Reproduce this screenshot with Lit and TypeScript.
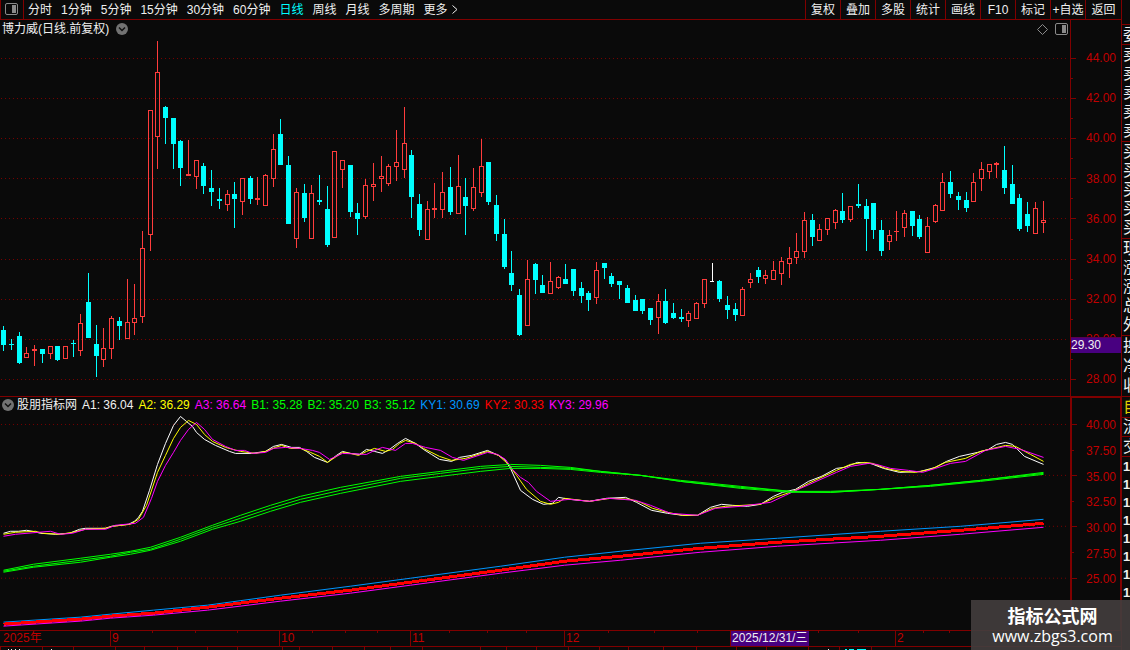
import { LitElement, html, svg, css } from "lit";
import { customElement, property, state } from "lit/decorators.js";

type Candle = [number, number, number, number, number, string];

/* x, high, body top, body bottom, low, kind (u = up, d = down, w = flat) */
const CANDLES: Candle[] = [
  [3, 326, 330, 345, 351, "d"], [11, 339, 344, 345, 350, "d"], [19, 332, 336, 363, 364, "d"],
  [26, 347, 353, 358, 358, "u"], [34, 345, 349, 351, 366, "u"], [42, 349, 349, 354, 363, "d"],
  [50, 346, 346, 354, 359, "u"], [57, 346, 346, 360, 361, "d"], [65, 346, 346, 359, 359, "u"],
  [73, 340, 343, 344, 357, "d"], [80, 314, 323, 351, 356, "u"], [88, 273, 302, 338, 338, "d"],
  [96, 325, 344, 356, 377, "d"], [103, 328, 348, 360, 367, "u"], [111, 316, 318, 349, 359, "u"],
  [119, 317, 321, 326, 340, "d"], [127, 279, 322, 339, 339, "u"], [134, 284, 318, 323, 335, "u"],
  [142, 231, 248, 317, 323, "u"], [150, 110, 110, 235, 251, "u"], [157, 41, 72, 137, 169, "u"],
  [165, 106, 107, 118, 144, "d"], [173, 118, 118, 144, 169, "d"], [180, 140, 141, 168, 186, "d"],
  [188, 140, 174, 176, 176, "u"], [196, 160, 160, 177, 189, "u"], [203, 163, 166, 186, 194, "d"],
  [211, 170, 188, 192, 206, "d"], [219, 188, 199, 201, 209, "d"], [227, 190, 194, 205, 211, "u"],
  [234, 182, 194, 199, 228, "d"], [242, 178, 178, 202, 215, "u"], [250, 176, 178, 199, 204, "d"],
  [257, 177, 198, 200, 205, "u"], [265, 174, 175, 206, 206, "u"], [273, 134, 149, 179, 187, "u"],
  [280, 119, 134, 165, 165, "d"], [288, 156, 165, 224, 224, "d"], [296, 188, 192, 239, 248, "u"],
  [304, 184, 193, 218, 222, "d"], [311, 185, 193, 239, 239, "u"], [319, 175, 200, 202, 205, "d"],
  [327, 186, 209, 245, 247, "d"], [334, 151, 151, 238, 238, "u"], [342, 160, 160, 170, 188, "u"],
  [350, 165, 165, 212, 217, "d"], [357, 203, 213, 219, 235, "d"], [365, 179, 185, 217, 219, "u"],
  [373, 163, 184, 187, 201, "u"], [381, 156, 176, 179, 192, "u"], [388, 164, 166, 184, 186, "u"],
  [396, 130, 162, 167, 181, "u"], [404, 107, 143, 170, 178, "u"], [411, 150, 155, 197, 218, "d"],
  [419, 194, 204, 230, 236, "d"], [427, 201, 209, 240, 240, "u"], [434, 183, 208, 210, 218, "u"],
  [442, 172, 192, 210, 218, "u"], [450, 167, 187, 212, 215, "d"], [458, 155, 186, 214, 214, "u"],
  [465, 178, 197, 206, 235, "d"], [473, 168, 187, 209, 211, "u"], [481, 139, 166, 193, 197, "u"],
  [488, 162, 162, 202, 205, "d"], [496, 195, 205, 234, 241, "d"], [504, 219, 234, 267, 269, "d"],
  [511, 251, 273, 285, 291, "d"], [519, 289, 295, 335, 336, "d"], [527, 260, 279, 326, 326, "u"],
  [535, 263, 264, 280, 294, "d"], [542, 275, 285, 293, 293, "d"], [550, 262, 281, 294, 294, "u"],
  [558, 276, 277, 288, 289, "u"], [565, 264, 279, 284, 284, "d"], [573, 269, 269, 291, 296, "d"],
  [581, 282, 288, 296, 303, "d"], [588, 291, 293, 300, 311, "d"], [596, 262, 270, 298, 304, "u"],
  [604, 263, 263, 268, 279, "d"], [611, 273, 276, 284, 287, "d"], [619, 281, 281, 285, 299, "d"],
  [627, 285, 288, 303, 303, "d"], [635, 295, 300, 311, 311, "d"], [642, 299, 299, 311, 314, "d"],
  [650, 308, 308, 320, 325, "d"], [658, 294, 301, 318, 334, "u"], [665, 289, 301, 323, 324, "d"],
  [673, 303, 313, 318, 319, "d"], [681, 309, 317, 319, 322, "d"], [688, 311, 313, 321, 327, "u"],
  [696, 302, 303, 319, 319, "u"], [704, 279, 279, 304, 308, "u"], [712, 263, 281, 282, 282, "w"],
  [719, 280, 281, 299, 302, "d"], [727, 296, 305, 310, 319, "d"], [735, 303, 309, 315, 321, "d"],
  [742, 287, 289, 316, 316, "u"], [750, 273, 279, 283, 288, "u"], [758, 267, 270, 277, 283, "d"],
  [765, 270, 275, 279, 284, "u"], [773, 261, 270, 280, 280, "u"], [781, 257, 261, 274, 285, "u"],
  [789, 247, 258, 264, 278, "u"], [796, 233, 251, 258, 264, "u"], [804, 212, 220, 252, 258, "u"],
  [812, 214, 220, 237, 246, "d"], [819, 224, 229, 241, 241, "u"], [827, 218, 218, 230, 235, "u"],
  [835, 209, 210, 223, 229, "u"], [842, 193, 211, 220, 223, "d"], [850, 206, 206, 220, 222, "u"],
  [858, 184, 204, 206, 208, "d"], [866, 199, 206, 219, 251, "d"], [873, 203, 203, 230, 239, "d"],
  [881, 220, 230, 251, 256, "d"], [889, 230, 235, 242, 250, "u"], [896, 211, 231, 232, 241, "u"],
  [904, 210, 213, 228, 237, "u"], [912, 211, 211, 226, 236, "d"], [919, 215, 219, 237, 239, "d"],
  [927, 217, 226, 253, 253, "u"], [935, 204, 205, 222, 223, "u"], [942, 173, 182, 211, 211, "u"],
  [950, 171, 182, 194, 198, "d"], [958, 192, 196, 200, 210, "d"], [966, 192, 200, 208, 212, "d"],
  [973, 173, 182, 202, 202, "u"], [981, 162, 169, 179, 191, "u"], [989, 164, 164, 172, 179, "u"],
  [996, 162, 163, 165, 178, "u"], [1004, 146, 170, 188, 194, "d"], [1012, 165, 184, 204, 204, "d"],
  [1019, 194, 198, 229, 231, "d"], [1027, 202, 214, 226, 232, "d"], [1035, 202, 208, 234, 234, "u"],
  [1043, 201, 220, 223, 233, "u"],
];

const A1 =
  "3,533 10,531 18,531 26,530 32,531 40,533 55,534 69,533 79,529 85,528 105,528 111,526 128,524 134,521 138,517 142,511 149,490 157,464 165,443 173,425 180,416 186,421 192,426 196,432 204,439 215,445 229,451 235,453 251,453 265,451 273,446 281,444 291,447 299,447 306,451 314,457 327,462 336,455 342,451 350,453 359,454 366,449 374,451 382,453 389,449 397,443 405,438 415,443 423,449 431,454 439,459 451,461 459,457 471,455 487,450 498,455 504,459 510,468 520,490 532,499 543,504 552,503 558,497 569,499 589,501 606,498 625,497 636,502 651,510 667,513 682,515 697,515 710,507 721,504 732,505 747,506 760,504 773,496 782,492 795,489 808,481 821,476 836,468 844,467 857,462 870,463 883,468 899,472 920,471 935,467 946,461 959,456 977,452 988,449 996,444 1005,442 1012,444 1024,456 1043,464";
const A2 =
  "3,534 15,532 35,531 42,533 60,534 72,532 85,529 105,528 112,526 130,524 138,519 146,505 157,472 165,455 173,438 180,427 188,420 196,424 204,434 212,441 225,447 240,451 255,453 265,451 275,447 281,445 290,448 300,448 310,452 319,456 327,462 342,452 350,453 358,455 366,451 374,448 385,451 392,449 399,443 405,440 415,443 423,448 439,456 451,460 465,458 487,451 498,455 508,464 516,475 526,489 540,501 550,504 558,502 564,498 589,501 610,498 630,499 640,502 652,508 667,512 682,515 697,515 712,508 725,506 760,504 775,497 795,490 808,483 836,470 850,464 864,462 872,463 885,468 900,471 915,472 930,469 945,462 965,458 980,451 1005,445 1015,446 1030,454 1043,461";
const A3 =
  "3,536 15,534 50,531 60,534 72,533 85,529 105,529 115,525 135,523 143,517 151,498 157,481 165,465 173,452 180,440 188,429 196,422 204,429 212,439 225,446 235,450 244,450 252,453 265,452 273,448 285,447 300,448 312,450 319,452 329,459 342,453 366,454 374,450 382,447 395,450 405,443 412,443 425,447 440,450 452,457 463,460 487,452 497,454 505,459 512,469 520,477 528,482 536,491 550,501 569,499 589,501 608,498 635,500 650,505 670,513 697,515 715,508 740,506 770,502 785,495 800,488 836,472 850,466 868,463 876,464 890,468 908,470 922,472 935,468 950,463 965,461 985,450 1005,446 1020,449 1043,457";

/* x followed by the y of each line in the band */
const B_BAND = [
  [3, 570, 571, 572], [33, 564, 566, 567], [80, 558, 560, 562], [110, 554, 556, 557],
  [130, 551, 552, 554], [150, 547, 549, 550], [180, 537, 539, 541], [212, 525, 527, 529],
  [240, 515, 518, 521], [270, 505, 508, 511], [300, 496, 499, 502], [340, 487, 490, 493],
  [400, 476, 478, 481], [440, 471, 473, 476], [480, 466, 468, 471], [510, 464, 466, 468],
  [540, 465, 467, 468], [570, 467, 468, 469], [600, 471, 471, 472], [640, 475, 475, 475],
  [680, 480, 481, 481], [740, 486, 487, 488], [790, 491, 491, 492], [830, 491, 492, 492],
  [880, 489, 489, 489], [930, 485, 485, 486], [980, 480, 480, 481], [1043, 472, 473, 474],
];
const KY_BAND = [
  [3, 622, 624, 626], [80, 617, 619, 621], [110, 614, 616, 618], [153, 610, 613, 615],
  [207, 605, 607, 610], [280, 595, 598, 601], [350, 586, 590, 593], [410, 578, 582, 585],
  [500, 566, 570, 573], [564, 557, 561, 565], [620, 551, 556, 560], [700, 543, 548, 552],
  [777, 538, 542, 546], [880, 531, 536, 540], [960, 526, 530, 534], [1043, 519, 523, 527],
];
const band = (rows: number[][], i: number) => rows.map((r) => `${r[0]},${r[i]}`).join(" ");

const LINES = [
  { pts: A1, color: "#ffffff", w: 1 },
  { pts: A2, color: "#ffff00", w: 1 },
  { pts: A3, color: "#ff00ff", w: 1 },
  { pts: band(B_BAND, 1), color: "#00ff00", w: 1 },
  { pts: band(B_BAND, 2), color: "#00ff00", w: 1 },
  { pts: band(B_BAND, 3), color: "#00ff00", w: 1 },
  { pts: band(KY_BAND, 1), color: "#0096ff", w: 1 },
  { pts: band(KY_BAND, 2), color: "#ff0000", w: 3 },
  { pts: band(KY_BAND, 3), color: "#ff00ff", w: 1 },
];

const PRICE_GRID = [58, 98, 138, 178, 218, 259, 299, 339, 379];
const PRICE_MINOR = [78, 118, 158, 198, 239, 279, 319, 359];
const SUB_GRID = [424, 475, 526, 578];
const SUB_MINOR = [450, 501, 552];
const DATE_TICKS = [152, 195, 237, 312, 345, 377, 449, 487, 526, 608, 654, 697, 818, 858, 923, 949];
const STRIP_TICKS = [
  0, 42, 73, 115, 144, 177, 207, 237, 282, 299, 332, 364, 390, 422, 480, 506, 536, 568, 599, 628,
  663, 696, 736, 766, 808, 839, 871,
];

const grid = (rows: number[]) =>
  rows.map((y) => svg`<path d="M1 ${y + 0.5}H1067" stroke="#780000" stroke-dasharray="1 3"/>`);

const panelIcon = html`<svg width="13" height="12" viewBox="0 0 13 12" aria-hidden="true">
  <rect x="0.5" y="0.5" width="12" height="11" rx="1.5" fill="none" stroke="#8a8a8a" />
  <rect x="7" y="2" width="4" height="8" fill="#8a8a8a" />
</svg>`;
const chevronIcon = html`<svg width="12" height="12" viewBox="0 0 12 12" aria-hidden="true">
  <circle cx="6" cy="6" r="6" fill="#727272" />
  <path d="M3 4.5L6 7.5L9 4.5" fill="none" stroke="#111" stroke-width="1.5" />
</svg>`;

@customElement("quote-toolbar")
export class QuoteToolbar extends LitElement {
  @state() private active = "日线";
  private periods = ["分时", "1分钟", "5分钟", "15分钟", "30分钟", "60分钟", "日线", "周线", "月线", "多周期"];
  private actions = ["复权", "叠加", "多股", "统计", "画线", "F10", "标记", "+自选", "返回"];

  static styles = css`
    :host { display: flex; height: 20px; box-sizing: border-box; border-bottom: 1px solid #800000; }
    button {
      appearance: none; background: none; border: 0; margin: 0; padding: 0; color: #f0f0f0;
      font: inherit; white-space: nowrap; cursor: pointer; display: flex; align-items: center;
    }
    .layout { width: 24px; box-sizing: border-box; border: solid #800000; border-width: 0 1px; padding: 0 0 2px 4px; }
    .periods { display: flex; gap: 9px; padding: 0 4px; flex: 1; min-width: 0; overflow: hidden; }
    .active { color: #00ffff; }
    .more { gap: 4px; }
    .actions { display: flex; }
    .actions button { width: 35px; border-left: 1px solid #800000; box-sizing: border-box; justify-content: center; }
    .actions button:last-child { width: 36px; }
  `;

  render() {
    return html`
      <button class="layout" aria-label="布局">${panelIcon}</button>
      <nav class="periods">
        ${this.periods.map(
          (p) => html`<button class=${p === this.active ? "active" : ""} @click=${() => (this.active = p)}>${p}</button>`
        )}
        <button class="more">更多<svg width="6" height="9" viewBox="0 0 6 9" aria-hidden="true">
          <path d="M0.5 0.5L5 4.5L0.5 8.5" fill="none" stroke="#f0f0f0" /></svg></button>
      </nav>
      <div class="actions">${this.actions.map((a) => html`<button>${a}</button>`)}</div>
    `;
  }
}

@customElement("value-axis")
export class ValueAxis extends LitElement {
  @property({ attribute: false }) labels: string[] = [];
  @property({ attribute: false }) major: number[] = [];
  @property({ attribute: false }) minor: number[] = [];
  @property({ attribute: false }) top = 0;
  @property({ attribute: false }) span = 1;

  static styles = css`
    :host { display: grid; grid-template: minmax(0, 1fr) / 100%; color: #c00000; }
    svg, ol { grid-area: 1 / 1; }
    svg { width: 5px; height: 100%; display: block; }
    ol {
      list-style: none; margin: 0; padding: var(--pad); display: flex; flex-direction: column;
      justify-content: space-between; text-align: right; line-height: 16px;
    }
  `;

  render() {
    return html`
      <svg viewBox="0 ${this.top} 5 ${this.span}" preserveAspectRatio="none" shape-rendering="crispEdges" aria-hidden="true">
        ${this.major.map((y) => svg`<rect x="0" y=${y} width="5" height="1" fill="#800000"/>`)}
        ${this.minor.map((y) => svg`<rect x="0" y=${y} width="2" height="1" fill="#800000"/>`)}
      </svg>
      <ol>${this.labels.map((l) => html`<li>${l}</li>`)}</ol>
    `;
  }
}

@customElement("side-quotes")
export class SideQuotes extends LitElement {
  private groups = ["", "委", "卖卖卖卖卖", "买买买买买", "现涨涨总外", "换净收", "自", "流", "交"];

  static styles = css`
    :host {
      display: grid; box-sizing: border-box; border-left: 1px solid #800000; overflow: hidden;
      grid-template-rows: 25fr 20fr 97fr 97fr 97fr 61fr 21fr 19fr 20fr 193fr;
      font-size: 16px; color: #f0f0f0;
    }
    .group { display: flex; flex-direction: column; min-height: 0; overflow: hidden; padding-left: 1px; border-bottom: 1px solid #800000; }
    .group span { flex: 1; min-height: 0; display: flex; align-items: center; line-height: 16px; }
    .own { color: #e0d000; }
    .ticks { overflow: hidden; min-height: 0; padding: 1px 0 0 1px; font-size: 13px; line-height: 18px; font-weight: 700; }
    .ticks div { height: 18px; }
  `;

  render() {
    return html`
      ${this.groups.map(
        (g) => html`<div class="group ${g === "自" ? "own" : ""}">${[...g].map((c) => html`<span>${c}</span>`)}</div>`
      )}
      <div class="ticks">${Array.from({ length: 8 }, () => html`<div>1</div>`)}</div>
    `;
  }
}

@customElement("app-root")
export class AppRoot extends LitElement {
  private legend = [
    ["A1: 36.04", "#f0f0f0"], ["A2: 36.29", "#ffff00"], ["A3: 36.64", "#ff00ff"],
    ["B1: 35.28", "#00ff00"], ["B2: 35.20", "#00ff00"], ["B3: 35.12", "#00ff00"],
    ["KY1: 30.69", "#0096ff"], ["KY2: 30.33", "#ff0000"], ["KY3: 29.96", "#ff00ff"],
  ];
  private months = ["2025年", "9", "10", "11", "12", "2"];

  static styles = css`
    :host {
      display: flex; position: relative; height: 100vh; overflow: hidden; background: #0a0a0a; color: #f0f0f0;
      font-family: "Liberation Sans", "Noto Sans CJK SC", sans-serif; font-size: 12px; line-height: 16px;
    }
    .main { flex: 1; min-width: 0; display: flex; flex-direction: column; }
    side-quotes { width: 9px; }
    .panel { display: flex; min-height: 0; }
    .price { flex: 377 1 0; border-bottom: 1px solid #800000; box-sizing: border-box; }
    .study { flex: 233 1 0; }
    .plot { flex: 1; min-width: 0; display: grid; grid-template: minmax(0, 1fr) / minmax(0, 1fr); }
    .plot > * { grid-area: 1 / 1; }
    .chart { display: block; width: 100%; height: 100%; }
    .head { display: flex; align-items: center; align-self: start; height: 18px; white-space: nowrap; }
    .title { padding: 0 2px; gap: 7px; }
    .tools { margin-left: auto; display: flex; gap: 7px; align-items: center; }
    .icon { appearance: none; background: none; border: 0; padding: 0; margin: 0; display: flex; cursor: pointer; }
    .legend { gap: 5px; padding-left: 2px; height: 16px; }
    .legend .icon { margin-right: -2px; }
    .scale { width: 51px; box-sizing: border-box; border-left: 1px solid #800000; position: relative; display: grid; }
    .scale value-axis { --pad: 30px 5px 9px 0; }
    .scale.box { border: solid #800000; border-width: 1px 1px 0 2px; }
    .scale.box value-axis { --pad: 19px 4px 43px 0; }
    .now { position: absolute; left: 0; right: 0; top: 317px; height: 15px; line-height: 15px; background: #480080; border-top: 1px solid #5a0050; }
    .dates { height: 16px; box-sizing: border-box; border-top: 1px solid #800000; position: relative; display: grid; grid-template: 15px / minmax(0, 1fr); color: #c00000; }
    .dates > .chart, .months { grid-area: 1 / 1; }
    .months { display: grid; grid-template-columns: 110fr 169fr 131fr 154fr 331fr 226fr; }
    .month { line-height: 15px; border-left: 1px solid #800000; padding-left: 1px; }
    .month:first-child { border-left: 0; padding-left: 3px; }
    .cursor { position: absolute; left: 730px; top: 0; height: 15px; line-height: 15px; padding: 0 2px 0 1px; background: #480080; border-left: 1px solid #800000; color: #f0f0f0; }
    .strip { height: 4px; box-sizing: border-box; border-top: 1px solid #800000; }
    .mark {
      position: absolute; right: 0; bottom: 0; width: 159px; height: 50px; box-sizing: border-box; padding: 4px 0 0 4px;
      background: rgba(66, 61, 61, 0.92); color: #fff; text-align: center;
    }
    .mark strong { display: block; font: 700 18px/22px "Noto Sans CJK SC", sans-serif; }
    .mark a { display: block; color: #fff; text-decoration: none; font: 16px/20px "Open Sans", sans-serif; }
  `;

  private candle([x, hi, top, bottom, lo, kind]: Candle) {
    const color = kind === "u" ? "#ff3c3c" : kind === "d" ? "#00ffff" : "#ffffff";
    const h = bottom - top;
    const body =
      kind === "u" && h > 2
        ? svg`<rect x=${x - 1.5} y=${top + 0.5} width="4" height=${h - 1} fill="none" stroke=${color}/>`
        : svg`<rect x=${x - 2} y=${top} width=${kind === "w" ? 4 : 5} height=${h} fill=${color}/>`;
    return svg`
      <rect x=${x} y=${hi} width="1" height=${top - hi} fill=${color}/>
      <rect x=${x} y=${bottom} width="1" height=${lo - bottom} fill=${color}/>
      ${body}`;
  }

  render() {
    return html`
      <div class="main">
        <quote-toolbar></quote-toolbar>
        <section class="panel price">
          <div class="plot">
            <svg class="chart" viewBox="0 20 1070 376" preserveAspectRatio="none" shape-rendering="crispEdges" role="img" aria-label="日线">
              ${grid(PRICE_GRID)} ${CANDLES.map((c) => this.candle(c))}
            </svg>
            <div class="head title">
              <span>博力威(日线.前复权)</span>
              <button class="icon" aria-label="展开">${chevronIcon}</button>
              <span class="tools">
                <button class="icon" aria-label="标注">
                  <svg width="11" height="11" viewBox="0 0 11 11"><path d="M5.5 0.5L10.5 5.5L5.5 10.5L0.5 5.5Z" fill="none" stroke="#8a8a8a" /></svg>
                </button>
                <button class="icon" aria-label="侧栏">${panelIcon}</button>
              </span>
            </div>
          </div>
          <div class="scale">
            <value-axis .top=${20} .span=${376} .major=${PRICE_GRID} .minor=${PRICE_MINOR}
              .labels=${["44.00", "42.00", "40.00", "38.00", "36.00", "34.00", "32.00", "30.00", "28.00"]}></value-axis>
            <div class="now">29.30</div>
          </div>
        </section>
        <section class="panel study">
          <div class="plot">
            <svg class="chart" viewBox="0 397 1070 233" preserveAspectRatio="none" shape-rendering="crispEdges" role="img" aria-label="股朋指标网">
              ${grid(SUB_GRID)}
              ${LINES.map(
                (l) => svg`<polyline points=${l.pts} transform="translate(0.5 0.5)" fill="none" stroke=${l.color} stroke-width=${l.w}/>`
              )}
            </svg>
            <div class="head legend">
              <button class="icon" aria-label="展开">${chevronIcon}</button>
              <span>股朋指标网</span>
              ${this.legend.map(([t, c]) => html`<span style="color:${c}">${t}</span>`)}
            </div>
          </div>
          <div class="scale box">
            <value-axis .top=${398} .span=${232} .major=${SUB_GRID} .minor=${SUB_MINOR}
              .labels=${["40.00", "37.50", "35.00", "32.50", "30.00", "27.50", "25.00"]}></value-axis>
          </div>
        </section>
        <div class="dates">
          <svg class="chart" viewBox="0 0 1121 15" preserveAspectRatio="none" shape-rendering="crispEdges" aria-hidden="true">
            ${DATE_TICKS.map((x) => svg`<rect x=${x} y="0" width="1" height="2" fill="#800000"/>`)}
          </svg>
          <div class="months">${this.months.map((m) => html`<div class="month">${m}</div>`)}</div>
          <span class="cursor">2025/12/31/三</span>
        </div>
        <div class="strip">
          <svg class="chart" viewBox="0 0 1121 3" preserveAspectRatio="none" shape-rendering="crispEdges" aria-hidden="true">
            ${STRIP_TICKS.map((x) => svg`<rect x=${x} y="0" width="1" height="3" fill="#800000"/>`)}
            ${[8, 11, 15, 19, 51, 828].map((x) => svg`<rect x=${x} y="2" width="1" height="1" fill="#f0f0f0"/>`)}
            <path d="M845 2.5H847M849 2.5H854M857 2.5H866" stroke="#00ffff" />
          </svg>
        </div>
      </div>
      <side-quotes></side-quotes>
      <div class="mark"><strong>指标公式网</strong><a href="#">www.zbgs3.com</a></div>
    `;
  }
}
